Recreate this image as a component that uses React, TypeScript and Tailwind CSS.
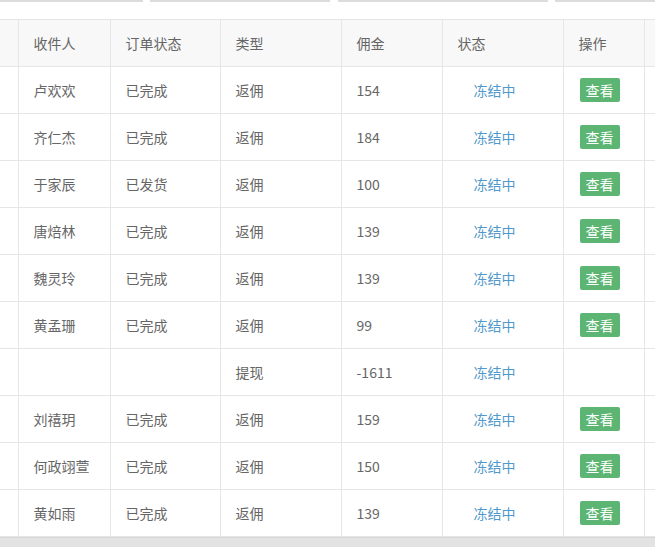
const rows = [
  { name: "卢欢欢", order: "已完成", type: "返佣", amount: "154", view: true },
  { name: "齐仁杰", order: "已完成", type: "返佣", amount: "184", view: true },
  { name: "于家辰", order: "已发货", type: "返佣", amount: "100", view: true },
  { name: "唐焙林", order: "已完成", type: "返佣", amount: "139", view: true },
  { name: "魏灵玲", order: "已完成", type: "返佣", amount: "139", view: true },
  { name: "黄孟珊", order: "已完成", type: "返佣", amount: "99", view: true },
  { name: "", order: "", type: "提现", amount: "-1611", view: false },
  { name: "刘禧玥", order: "已完成", type: "返佣", amount: "159", view: true },
  { name: "何政翊萱", order: "已完成", type: "返佣", amount: "150", view: true },
  { name: "黄如雨", order: "已完成", type: "返佣", amount: "139", view: true },
];

const cell = "h-[47px] border border-[#e6e6e6] pl-[15px] text-left align-middle font-normal";

export default function App() {
  return (
    <div
      className="w-[655px] h-[547px] overflow-hidden bg-white text-[14px] text-[#666]"
      style={{ fontFamily: '"Noto Sans CJK SC", "Noto Sans", sans-serif' }}
    >
      {/* search inputs, cut off at the top */}
      <div className="flex h-[2px]">
        <div className="w-[143px] bg-[#dcdcdc]" />
        <div className="ml-[7px] w-[180px] bg-[#dcdcdc]" />
        <div className="ml-[8px] w-[210px] bg-[#dcdcdc]" />
        <div className="ml-[7px] flex-1 bg-[#dcdcdc]" />
      </div>

      <div className="mt-[17px]">
        <table className="table-fixed border-collapse w-[670px]">
          <colgroup>
            <col className="w-[18px]" />
            <col className="w-[92px]" />
            <col className="w-[110px]" />
            <col className="w-[121px]" />
            <col className="w-[101px]" />
            <col className="w-[121px]" />
            <col className="w-[81px]" />
            <col className="w-[26px]" />
          </colgroup>
          <thead>
            <tr className="bg-[#f8f8f8]">
              <th className={`${cell} border-l-0`} />
              <th className={cell}>收件人</th>
              <th className={cell}>订单状态</th>
              <th className={cell}>类型</th>
              <th className={cell}>佣金</th>
              <th className={cell}>状态</th>
              <th className={cell}>操作</th>
              <th className={cell} />
            </tr>
          </thead>
          <tbody>
            {rows.map((r, i) => (
              <tr key={i}>
                <td className={`${cell} border-l-0`} />
                <td className={cell}>{r.name}</td>
                <td className={cell}>{r.order}</td>
                <td className={cell}>{r.type}</td>
                <td className={cell}>{r.amount}</td>
                <td className={`${cell} pl-[31px] text-[#5199cc]`}>冻结中</td>
                <td className={`${cell} pl-[16px]`}>
                  {r.view && (
                    <span className="inline-flex h-[24px] w-[40px] items-center justify-center rounded-[2px] bg-[#5cb572] text-[14px] text-white">
                      查看
                    </span>
                  )}
                </td>
                <td className={cell} />
              </tr>
            ))}
          </tbody>
        </table>
      </div>

      {/* horizontal scrollbar */}
      <div className="h-[11px] bg-[#e3e3e3] border-t border-[#d6d6d6]" />
    </div>
  );
}
